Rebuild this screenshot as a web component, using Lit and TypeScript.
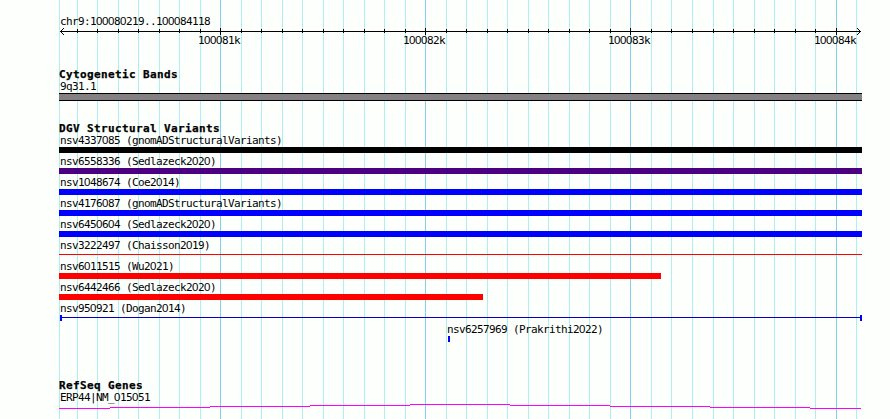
import { LitElement, html, svg, css } from 'lit';
import { customElement, property } from 'lit/decorators.js';

type Shape = 'bar' | 'line' | 'span';

interface Variant {
  name: string;
  color: string;
  shape: Shape;
  from: number;
  to: number;
  labelAt?: number;
}

const REGION_START = 100080219;
const REGION_END = 100084118;
const LEFT = 59;
const RIGHT = 862;

// base position -> pixel column
const toX = (pos: number) =>
  Math.round(60 + ((pos - REGION_START) * 800) / (REGION_END - REGION_START + 1));

const TICKS: { pos: number; x: number; major: boolean }[] = [];
for (let pos = 100080300; pos <= REGION_END; pos += 100) {
  TICKS.push({ pos, x: toX(pos), major: pos % 1000 === 0 });
}

const VARIANTS: Variant[] = [
  { name: 'nsv4337085 (gnomADStructuralVariants)', color: '#000000', shape: 'bar', from: LEFT, to: RIGHT },
  { name: 'nsv6558336 (Sedlazeck2020)', color: '#4b0082', shape: 'bar', from: LEFT, to: RIGHT },
  { name: 'nsv1048674 (Coe2014)', color: '#0000ff', shape: 'bar', from: LEFT, to: RIGHT },
  { name: 'nsv4176087 (gnomADStructuralVariants)', color: '#0000ff', shape: 'bar', from: LEFT, to: RIGHT },
  { name: 'nsv6450604 (Sedlazeck2020)', color: '#0000ff', shape: 'bar', from: LEFT, to: RIGHT },
  { name: 'nsv3222497 (Chaisson2019)', color: '#ff0000', shape: 'line', from: LEFT, to: RIGHT },
  { name: 'nsv6011515 (Wu2021)', color: '#ff0000', shape: 'bar', from: LEFT, to: 661 },
  { name: 'nsv6442466 (Sedlazeck2020)', color: '#ff0000', shape: 'bar', from: LEFT, to: 483 },
  { name: 'nsv950921 (Dogan2014)', color: '#0000ff', shape: 'span', from: 60, to: RIGHT },
  { name: 'nsv6257969 (Prakrithi2022)', color: '#0000ff', shape: 'bar', from: 448, to: 450, labelAt: 447 },
];

// [x, y, width] of each step of the transcript line
const GENE_STEPS = [
  [59, 4, 51],
  [110, 3, 100],
  [210, 2, 100],
  [310, 1, 100],
  [410, 0, 100],
  [510, 1, 100],
  [610, 2, 100],
  [710, 3, 100],
  [810, 4, 51],
];

@customElement('track-label')
export class TrackLabel extends LitElement {
  static styles = css`
    :host {
      display: block;
      height: 13px;
      font: 11px/13px 'DejaVu Sans Mono', monospace;
      letter-spacing: -0.62px;
      white-space: pre;
      color: #000;
    }

    /* plain zero, without the dot */
    .zero {
      font-family: 'Liberation Sans', sans-serif;
      font-size: 11.5px;
      line-height: 0;
      letter-spacing: -0.4px;
    }
  `;

  @property() text = '';

  render() {
    return this.text
      .split(/(0+)/)
      .map((part) => (part[0] === '0' ? html`<span class="zero">${part}</span>` : part));
  }
}

@customElement('app-root')
export class GenomeBrowser extends LitElement {
  static styles = css`
    :host {
      display: block;
      position: relative;
      box-sizing: border-box;
      width: 890px;
      height: 419px;
      padding-top: 15px;
      overflow: hidden;
      background: #fdfffc;
    }

    svg {
      display: block;
      shape-rendering: crispEdges;
    }

    .grid {
      position: absolute;
      top: 0;
      left: 0;
    }

    .ruler,
    section {
      position: relative;
    }

    .ruler {
      height: 53px;
    }

    .ruler text {
      font: 11px 'DejaVu Sans Mono', monospace;
      letter-spacing: -0.62px;
    }

    .ruler .zero {
      font-family: 'Liberation Sans', sans-serif;
      font-size: 11.5px;
      letter-spacing: -0.4px;
    }

    .variants {
      margin-top: 21px;
    }

    .genes {
      margin-top: 35px;
    }

    h2 {
      margin: 0;
      padding-left: 59px;
      height: 12px;
      font: bold 11px/13px 'DejaVu Sans Mono', monospace;
      letter-spacing: 0.38px;
      -webkit-text-stroke: 0.25px #000;
      color: #000;
    }

    track-label {
      padding-left: 60px;
    }

    .band {
      box-sizing: border-box;
      width: 803px;
      height: 8px;
      margin-left: 59px;
      border: solid #000;
      border-width: 1px 0;
      background: #848084;
    }

    .row {
      height: 21px;
    }
  `;

  renderGrid() {
    return html`
      <svg class="grid" width="890" height="419">
        <rect x=${LEFT} y="0" width="1" height="419" fill="#afeeee" />
        ${TICKS.map(
          (t) => svg`<rect x=${t.x} y="0" width="1" height="419" fill=${t.major ? '#87ceeb' : '#afeeee'} />`
        )}
      </svg>
    `;
  }

  renderTickLabel(x: number, pos: number) {
    const parts = `${pos / 1000}k`.split(/(0+)/);
    return svg`<text x=${x - 22} y="16">${parts.map((p) =>
      p[0] === '0' ? svg`<tspan class="zero">${p}</tspan>` : p
    )}</text>`;
  }

  renderRuler() {
    return html`
      <div class="ruler">
        <track-label .text=${'chr9:100080219..100084118'}></track-label>
        <svg width="890" height="20">
          <rect x="60" y="3" width="801" height="1" />
          <path d="M60 3h1v1h-1zM61 2h1v1h-1zM61 4h1v1h-1zM62 1h1v1h-1zM62 5h1v1h-1zM63 0h1v1h-1zM63 6h1v1h-1z" />
          <path d="M860 3h1v1h-1zM859 2h1v1h-1zM859 4h1v1h-1zM858 1h1v1h-1zM858 5h1v1h-1zM857 0h1v1h-1zM857 6h1v1h-1z" />
          ${TICKS.filter((t) => t.x < 850).map((t) =>
            t.major
              ? svg`<rect x=${t.x} y="0" width="1" height="7" />${this.renderTickLabel(t.x, t.pos)}`
              : svg`<rect x=${t.x} y="1" width="1" height="4" />`
          )}
        </svg>
      </div>
    `;
  }

  renderShape(v: Variant) {
    const width = v.to - v.from;
    if (v.shape === 'line') {
      return svg`<rect x=${v.from} y="2" width=${width} height="1" fill=${v.color} />`;
    }
    if (v.shape === 'span') {
      return svg`
        <rect x=${v.from} y="2" width=${width} height="1" fill="#0000cd" />
        <rect x=${v.from} y="0" width="2" height="6" fill=${v.color} />
        <rect x=${v.to - 2} y="0" width="2" height="6" fill=${v.color} />
      `;
    }
    return svg`<rect x=${v.from} y="0" width=${width} height="6" fill=${v.color} />`;
  }

  renderVariant(v: Variant) {
    // features starting inside the region carry their label with them
    return html`
      <div class="row">
        <track-label .text=${v.name} style=${v.labelAt ? `padding-left: ${v.labelAt}px` : ''}></track-label>
        <svg width="890" height="6">${this.renderShape(v)}</svg>
      </div>
    `;
  }

  render() {
    return html`
      ${this.renderGrid()} ${this.renderRuler()}
      <section>
        <h2>Cytogenetic Bands</h2>
        <track-label .text=${'9q31.1'}></track-label>
        <div class="band"></div>
      </section>
      <section class="variants">
        <h2>DGV Structural Variants</h2>
        ${VARIANTS.map((v) => this.renderVariant(v))}
      </section>
      <section class="genes">
        <h2>RefSeq Genes</h2>
        <track-label .text=${'ERP44|NM_015051'}></track-label>
        <svg width="890" height="6">
          ${GENE_STEPS.map(([x, y, w]) => svg`<rect x=${x} y=${y} width=${w} height="1" fill="#ff00ff" />`)}
        </svg>
      </section>
    `;
  }
}
